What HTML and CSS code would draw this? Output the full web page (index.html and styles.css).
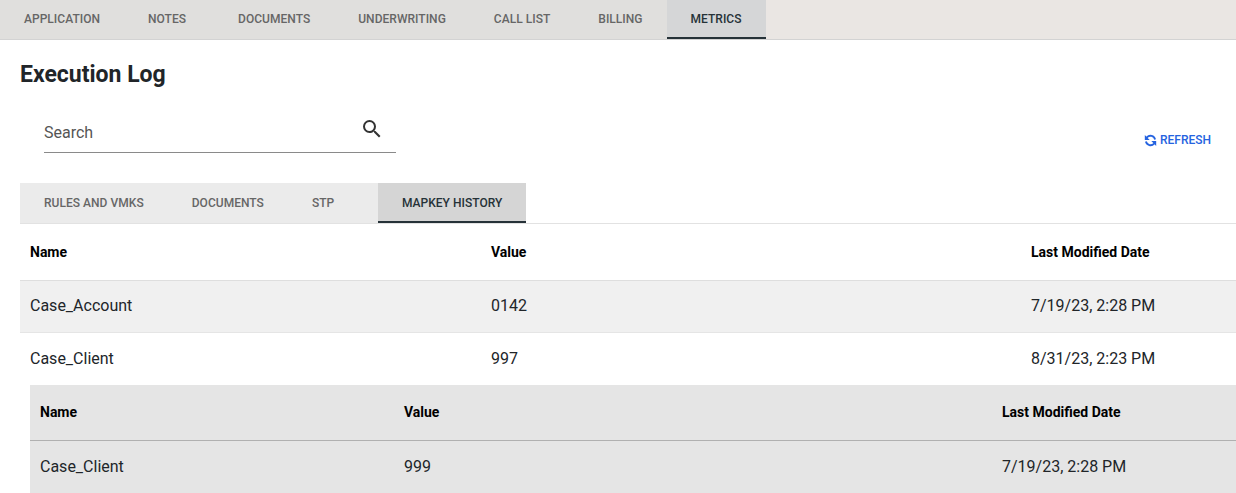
FILE: index.html
```html
<!DOCTYPE html>
<html lang="en">
<head>
<meta charset="utf-8">
<title>Execution Log</title>
<link rel="stylesheet" href="styles.css">
</head>
<body>
<nav class="main-tabs">
  <a class="tab">Application</a>
  <a class="tab">Notes</a>
  <a class="tab">Documents</a>
  <a class="tab">Underwriting</a>
  <a class="tab">Call List</a>
  <a class="tab">Billing</a>
  <a class="tab active">Metrics</a>
</nav>
<main>
  <h1 class="title">Execution Log</h1>
  <div class="toolbar">
    <div class="search">
      <span class="search-label">Search</span>
      <svg class="search-icon" viewBox="0 0 24 24" width="24" height="24"><path fill="#333" d="M15.5 14h-.79l-.28-.27A6.47 6.47 0 0 0 16 9.5 6.5 6.5 0 1 0 9.5 16c1.61 0 3.09-.59 4.23-1.57l.27.28v.79l5 4.99L20.49 19l-4.99-5zm-6 0C7.01 14 5 11.99 5 9.5S7.01 5 9.5 5 14 7.01 14 9.5 11.99 14 9.5 14z"/></svg>
    </div>
    <button class="refresh">
      <svg viewBox="0 0 24 24" width="13" height="13"><path fill="none" stroke="#2563e0" stroke-width="3.4" d="M20.5 10A8.8 8.8 0 0 0 5.4 6.200L3 9M3.500 14a8.800 8.800 0 0 0 15.100 3.800L21 15"/><path fill="#2563e0" d="M1.500 2V11H10.500zM22.500 22V13H13.500z"/></svg>
      Refresh
    </button>
  </div>
  <nav class="sub-tabs">
    <a class="tab">Rules and VMKs</a>
    <a class="tab">Documents</a>
    <a class="tab">STP</a>
    <a class="tab active">Mapkey History</a>
  </nav>
  <section class="outer">
    <div class="row head"><span>Name</span><span>Value</span><span>Last Modified Date</span></div>
    <div class="row body shaded"><span>Case_Account</span><span>0142</span><span>7/19/23, 2:28 PM</span></div>
    <div class="row body last"><span>Case_Client</span><span>997</span><span>8/31/23, 2:23 PM</span></div>
    <div class="nested">
      <div class="row head"><span>Name</span><span>Value</span><span>Last Modified Date</span></div>
      <div class="row body"><span>Case_Client</span><span>999</span><span>7/19/23, 2:28 PM</span></div>
    </div>
  </section>
</main>
</body>
</html>
```
FILE: styles.css
```css
* { box-sizing: border-box; }
html, body { margin: 0; padding: 0; height: 493px; overflow: hidden; background: #fff; }
body { font-family: Roboto, "Liberation Sans", sans-serif; color: #212529; }

.main-tabs {
  display: flex;
  height: 40px;
  background: #eae6e3;
  border-bottom: 1px solid #d3d3d3;
}
.tab {
  display: flex;
  align-items: center;
  min-width: 90px;
  padding: 0 24px;
  font-size: 12px;
  font-weight: 500;
  letter-spacing: .03px;
  text-transform: uppercase;
  color: #666;
  background: #e0dfdd;
  border-bottom: 2px solid transparent;
}
.tab.active {
  color: #263238;
  background: #d5d6d7;
  border-bottom-color: #263238;
}

.title {
  margin: 0;
  padding: 22px 0 0 20px;
  height: 71px;
  font-size: 23px;
  line-height: 26px;
  font-weight: 700;
  color: #212529;
}

.toolbar {
  display: flex;
  justify-content: space-between;
  align-items: flex-end;
  padding: 0 25px 0 44px;
  height: 42px;
}
.search {
  width: 352px;
  height: 42px;
  display: flex;
  justify-content: space-between;
  align-items: flex-start;
  border-bottom: 1px solid #8a8a8a;
  padding-right: 12px;
}
.search-label { font-size: 16px; line-height: 18px; padding-top: 13px; color: #555; }
.search-icon { display: block; margin-top: 6px; }
.refresh {
  display: flex;
  align-items: center;
  gap: 3px;
  height: 16px;
  margin-bottom: 5px;
  padding: 0;
  border: 0;
  background: none;
  font-family: inherit;
  font-size: 12px;
  font-weight: 500;
  text-transform: uppercase;
  color: #2563e0;
}

.sub-tabs {
  display: flex;
  height: 41px;
  margin: 30px 0 0 20px;
  border-bottom: 1px solid #e2e2e2;
}
.sub-tabs .tab { background: #ebebeb; height: 40px; padding-top: 1px; }
.sub-tabs .tab.active { background: #d5d5d5; }

.outer { margin-left: 20px; font-size: 16px; }
.row {
  display: grid;
  grid-template-columns: 461px 540px 1fr;
  padding-left: 10px;
  align-items: center;
}
.row.head {
  height: 57px;
  font-size: 14px;
  font-weight: 700;
  color: #000;
  border-bottom: 1px solid #dedede;
}
.row.body { height: 52px; padding-bottom: 2px; border-bottom: 1px solid #e5e5e5; }
.row.shaded { background: #f0f0f0; }
.row.last { border-bottom: 0; }

.nested { margin-left: 10px; background: #e5e5e5; height: 108px; }
.nested .row { grid-template-columns: 364px 598px 1fr; }
.nested .row.head { height: 56px; padding-bottom: 2px; border-bottom-color: #b0b0b0; }
.nested .row.body { border-bottom: 0; }
```
